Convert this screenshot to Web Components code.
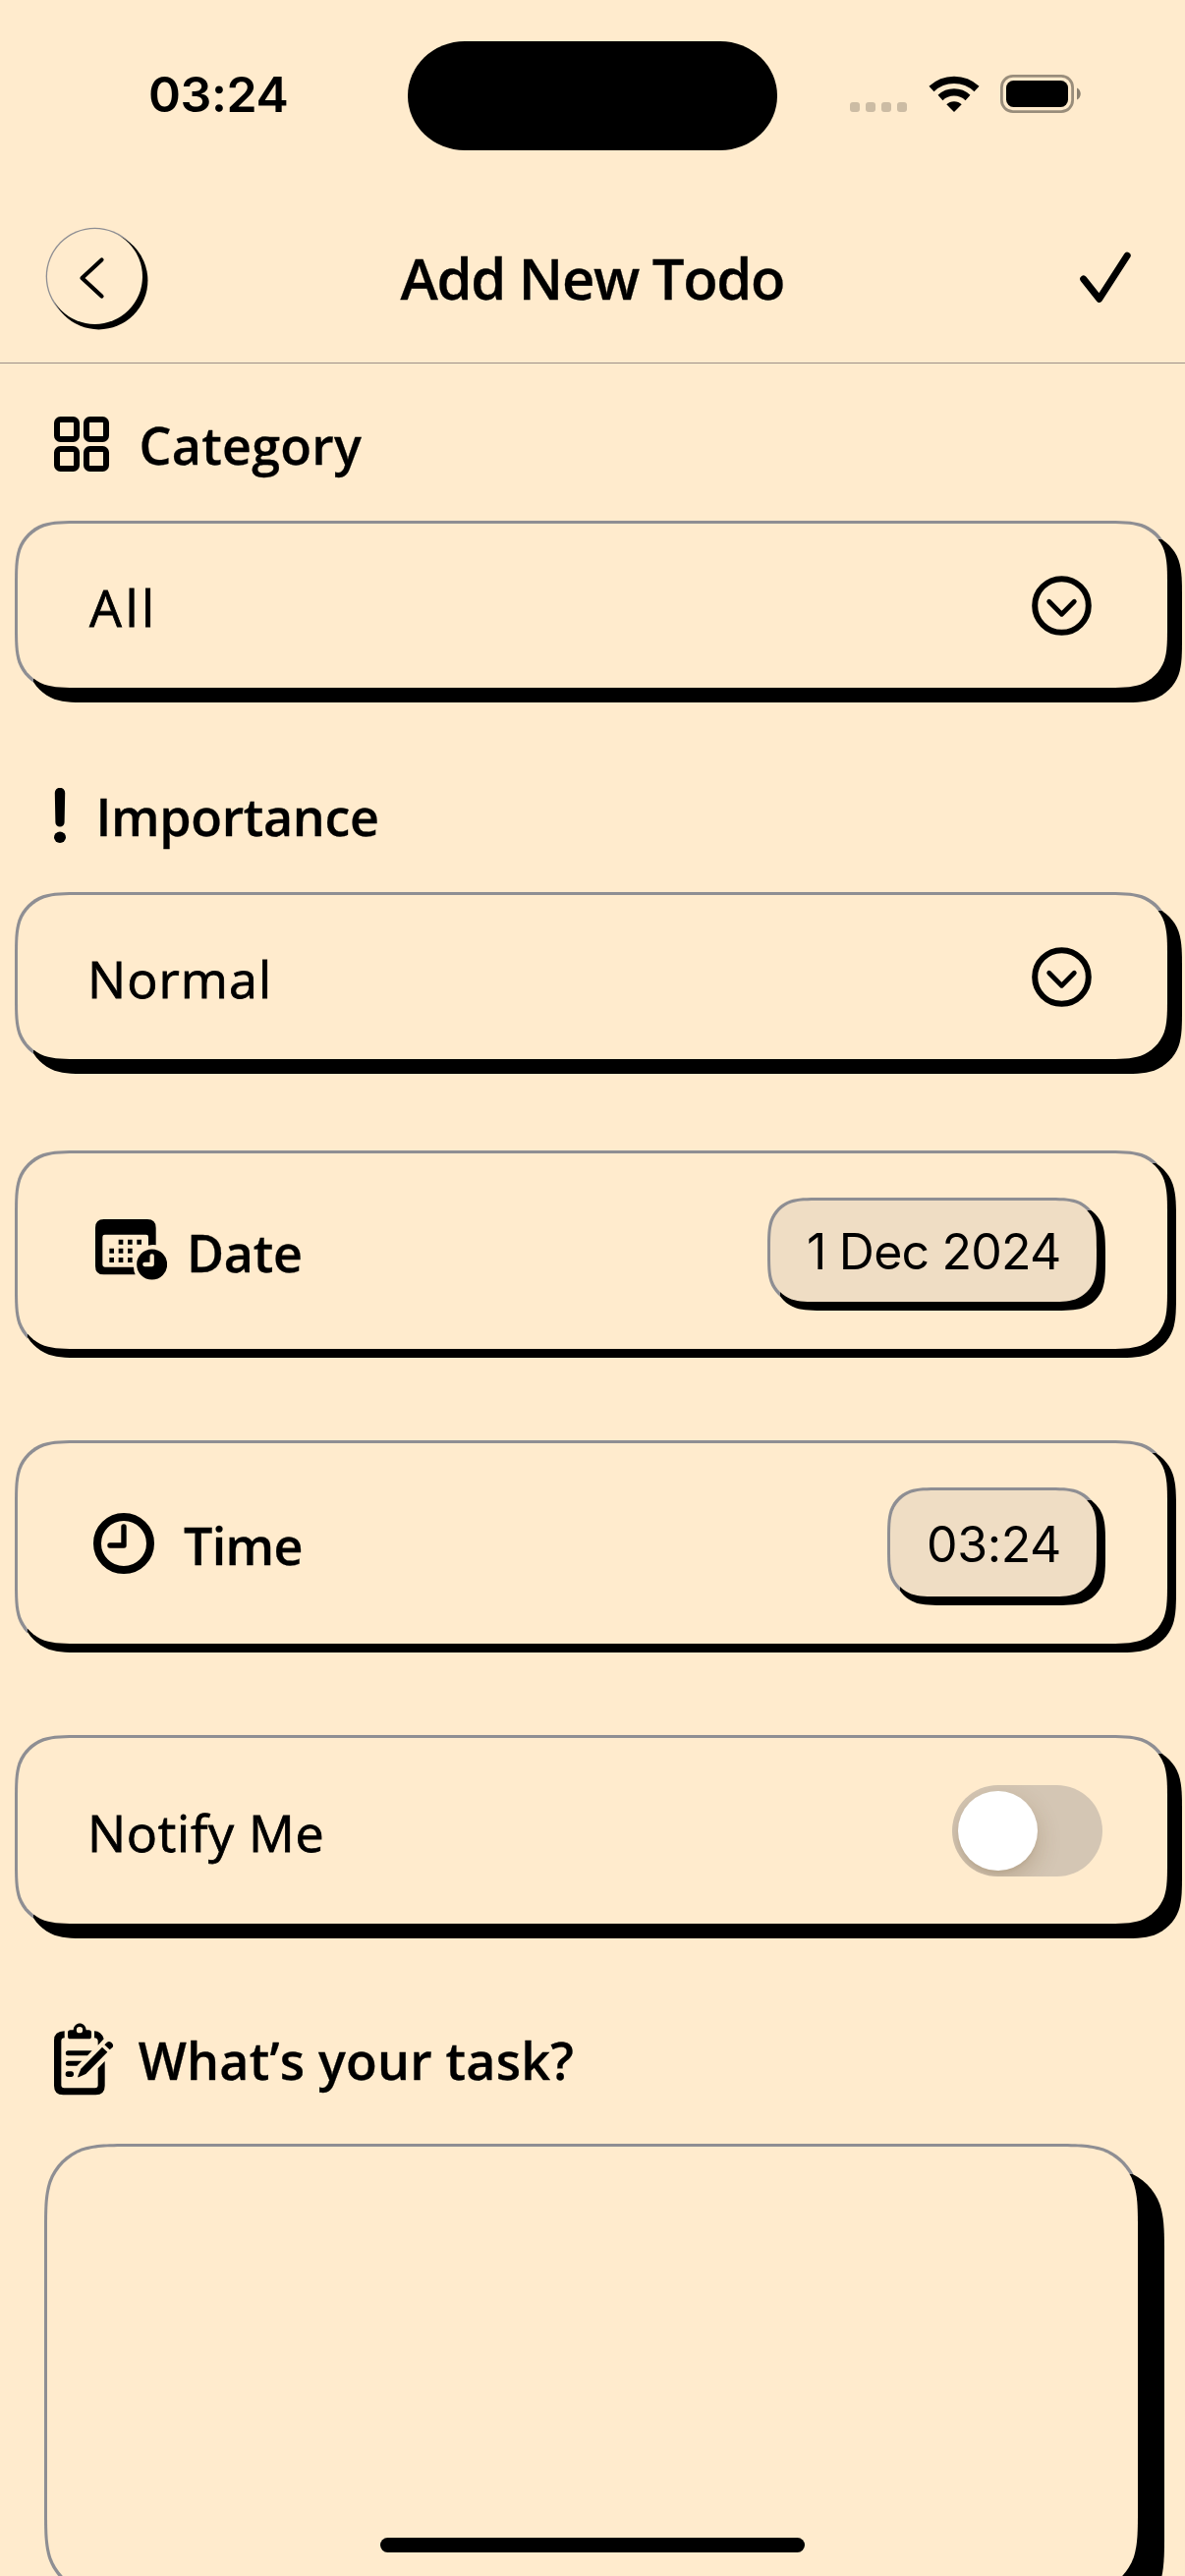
<!DOCTYPE html>
<html lang="en">
<head>
<meta charset="utf-8">
<title>Add New Todo</title>
<style>
  html, body { margin: 0; padding: 0; }
  body {
    width: 1206px; height: 2622px; overflow: hidden;
    background: #ffebcd; color: #000;
    font-family: "Open Sans", sans-serif;
  }
</style>
</head>
<body>
<todo-screen></todo-screen>

<script>
const define = (name, html, setup) => customElements.define(name, class extends HTMLElement {
  constructor() {
    super();
    this.attachShadow({ mode: 'open' }).innerHTML = html;
  }
  connectedCallback() { if (setup) setup.call(this); }
});

/* One line of text whose visible ink spans exactly the width in "w". */
const pen = document.createElement('canvas').getContext('2d');
define('ink-text', `
  <style>
    :host { display: block; flex: none; height: 60px; line-height: 60px; white-space: nowrap; -webkit-text-stroke: .8px #000; }
    :host([weight]) { -webkit-text-stroke: .3px #000; }
    :host([family]) { -webkit-text-stroke: 0; }
    span { display: inline-block; height: 60px; }
  </style><span><slot></slot></span>`, function () {
  const text = this.textContent, w = +this.getAttribute('w');
  const size = this.getAttribute('size') || 52, weight = this.getAttribute('weight') || 400;
  const family = this.getAttribute('family') || 'Open Sans';
  const dy = +(this.getAttribute('dy') || 0);
  pen.font = `${weight} ${size}px "${family}"`;
  const m = pen.measureText(text);
  const ink = m.actualBoundingBoxLeft + m.actualBoundingBoxRight;
  const s = this.style;
  s.font = `${weight} ${size}px/60px "${family}", sans-serif`;
  s.width = w + 'px';
  s.letterSpacing = ((w - ink) / (text.length - 1)).toFixed(3) + 'px';
  if (dy > 0) s.marginTop = 2 * dy + 'px'; else s.marginBottom = -2 * dy + 'px';
  this.shadowRoot.querySelector('span').style.marginLeft = m.actualBoundingBoxLeft + 'px';
});

/* Rounded rectangle with continuous corners, as a path. */
function smoothRect(x, y, w, h, r) {
  const steps = [[1.528665, 0], [1.088493, 0], [.868407, 0], [.631494, .074911], [.372824, .169059], [.169059, .372824], [.074911, .631494], [0, .868407], [0, 1.088493], [0, 1.528665]];
  const corner = (fx, fy, flip) => {
    const p = (flip ? [...steps].reverse() : steps).map(([a, b]) => [fx(a * r), fy(b * r)].map(n => n.toFixed(2)).join(' '));
    return `L${p[0]}C${p.slice(1, 4).join(' ')}C${p.slice(4, 7).join(' ')}C${p.slice(7, 10).join(' ')}`;
  };
  const L = a => x + a, R = a => x + w - a, T = b => y + b, B = b => y + h - b;
  return ('M' + corner(R, T, false).slice(1) + corner(R, B, true) + corner(L, B, false) + corner(L, T, true) + 'Z');
}

/* Grey outline on the lit side, hard black shadow offset by "drop" towards lower right. */
const raisedHTML = `
  <style>
    :host { display: grid; flex: none; }
    svg { grid-area: 1 / 1; display: block; overflow: visible; }
    .in { grid-area: 1 / 1; display: flex; align-items: center; justify-content: space-between; min-width: 0; }
  </style><svg></svg><div class="in"><slot></slot></div>`;
function drawRaised() {
  const num = (k, d) => +(this.getAttribute(k) || d);
  const w = num('w', 1170), h = num('h'), drop = num('drop', 12), r = num('r', 45);
  const fill = this.getAttribute('fill') || '#ffebcd';
  this.style.width = w + 'px';
  this.style.height = h + 'px';
  const svg = this.shadowRoot.querySelector('svg');
  svg.setAttribute('width', w);
  svg.setAttribute('height', h);
  const d = drop + 4;
  svg.innerHTML =
    `<clipPath id="lit"><path d="M-5 -5H${w + 5}V${d}H60L${d} 60V${h + 5}H-5Z"/></clipPath>` +
    `<path fill="#000" d="${smoothRect(drop - 3, drop - 3, w + 6, h + 6, r)}"/>` +
    `<path fill="#8e8e93" clip-path="url(#lit)" d="${smoothRect(-3, -3, w + 6, h + 6, r)}"/>` +
    `<path fill="${fill}" d="${smoothRect(0, 0, w, h, r - 2)}"/>`;
}
define('raised-card', raisedHTML + `<style>:host { margin-left: 18px; } .in { padding: var(--pad, 0); }</style>`, drawRaised);
define('value-pill', raisedHTML + `<style>.in { padding: 0 38px 0 39px; }</style>`, drawRaised);

define('status-bar', `
  <style>
    :host { display: flex; flex: none; align-items: center; height: 194px; box-sizing: border-box; padding-left: 153px; }
    svg { flex: none; display: block; }
    .icon { margin-bottom: 3px; }
  </style>
  <ink-text w="138.5" size="50" weight="600" family="Inter" dy="-1.2">03:24</ink-text>
  <svg class="island" width="376" height="111" style="margin-left:123.5px"><rect width="376" height="111" rx="58" ry="55.5"/></svg>
  <svg class="icon" width="58" height="39" viewBox="865 76 58 39" style="margin-left:74px" fill="#000" fill-opacity=".2">
    <rect x="865" y="104" width="10" height="10" rx="3"/><rect x="881" y="104" width="10" height="10" rx="3"/>
    <rect x="897" y="104" width="10" height="10" rx="3"/><rect x="913" y="104" width="10" height="10" rx="3"/>
  </svg>
  <svg class="icon" width="52" height="39" viewBox="944.5 76 52 39" style="margin-left:21.5px">
    <path d="M947.5 90.5A33.5 33.5 0 0 1 993.5 90.5" fill="none" stroke="#000" stroke-width="7.4"/>
    <path d="M956.5 99.5A20.5 20.5 0 0 1 984.5 99.5" fill="none" stroke="#000" stroke-width="7.2"/>
    <path d="M970.5 114L962.8 106.3A11 11 0 0 1 978.2 106.3Z"/>
  </svg>
  <svg class="icon" width="83" height="39" viewBox="1018 76 83 39" style="margin-left:21.5px">
    <rect x="1019.4" y="77.4" width="72.2" height="36.2" rx="11.5" fill="none" stroke="#000" stroke-opacity=".4" stroke-width="2.8"/>
    <rect x="1024" y="82" width="63" height="27" rx="7.5"/>
    <path d="M1096 89.5C1101 91.5 1101 99.5 1096 101.5Z" fill-opacity=".45"/>
  </svg>`);

define('nav-bar', `
  <style>
    :host { display: flex; flex: none; align-items: center; height: 176px; box-sizing: border-box;
      border-bottom: 1.5px solid #9c9088; padding-left: 47.5px; }
    .back { flex: none; display: flex; width: 97px; height: 97px; border-radius: 50%; background: #ffebcd;
      box-shadow: 4px 4px 0 1.4px #000, 0 0 0 1.3px #8e8e93; }
    .done { flex: none; display: block; margin-left: 301px; }
  </style>
  <div class="back"><svg width="97" height="97" viewBox="47.5 233 97 97">
    <path d="M103 264.5L83 283L103 301.5" fill="none" stroke="#000" stroke-width="4.2" stroke-linecap="round" stroke-linejoin="round"/></svg></div>
  <ink-text w="389.5" size="58" weight="600" dy="1.8" style="margin-left:263px">Add New Todo</ink-text>
  <svg class="done" width="54" height="56" viewBox="1098 254 54 56">
    <path d="M1102.7 284L1118.8 304.2L1147.2 260.2" fill="none" stroke="#000" stroke-width="7" stroke-linecap="round" stroke-linejoin="round"/></svg>`);

define('section-head', `
  <style>
    :host { display: flex; flex: none; align-items: center; height: 76px; padding-left: 55px; }
    ::slotted(svg) { flex: none; display: block; }
  </style><slot></slot>`);

define('toggle-switch', `
  <style>
    :host { display: flex; align-items: center; flex: none; width: 153px; height: 93px; box-sizing: border-box;
      padding-left: 6px; border-radius: 47px; background: #d4c6b4; overflow: hidden; }
    i { width: 81px; height: 81px; border-radius: 50%; background: #fff; box-shadow: 0 9px 24px rgba(90,60,20,.22), 0 3px 3px rgba(90,60,20,.06); }
  </style><i></i>`);

define('chevron-ring', `
  <style>:host, svg { display: block; flex: none; }</style>
  <svg width="61" height="61" viewBox="-30.5 -30.5 61 61" fill="none" stroke="#000">
    <circle r="27.3" stroke-width="6"/>
    <path d="M-12.8 -4.2L0 8.7L12.8 -4.2" stroke-width="4.8" stroke-linecap="round" stroke-linejoin="round"/>
  </svg>`);

define('home-indicator', `
  <style>:host { display: block; position: absolute; left: 387px; top: 2583px; width: 432px; height: 15px; border-radius: 8px; background: #000; }</style>`);

define('todo-screen', `
  <style>
    :host { display: flex; flex-direction: column; width: 1206px; height: 2622px; overflow: hidden; position: relative; }
    main { display: flex; flex: none; flex-direction: column; }
    .row { display: flex; align-items: center; }
    svg { display: block; flex: none; }
  </style>
  <status-bar></status-bar>
  <nav-bar></nav-bar>
  <main>
    <section-head style="margin-top:44px">
      <svg width="56" height="56" viewBox="0 0 56 56" fill="none" stroke="#000" stroke-width="6">
        <rect x="3" y="3" width="20" height="20" rx="3.5"/><rect x="33" y="3" width="20" height="20" rx="3.5"/>
        <rect x="3" y="33" width="20" height="20" rx="3.5"/><rect x="33" y="33" width="20" height="20" rx="3.5"/>
      </svg>
      <ink-text w="223.5" weight="600" dy=".6" style="margin-left:33.5px">Category</ink-text>
    </section-head>
    <raised-card h="167" style="margin-top:43px;--pad:0 77px 0 73px">
      <ink-text w="62" dy="1.2">All</ink-text><chevron-ring></chevron-ring>
    </raised-card>

    <section-head style="margin-top:92px">
      <svg width="12" height="56" viewBox="55 802 12 56">
        <path d="M55.8 807A5.2 5.2 0 0 1 66.2 807L65.6 837A4.6 4.6 0 0 1 56.4 837Z"/><ellipse cx="61" cy="852.3" rx="6" ry="5.7"/>
      </svg>
      <ink-text w="282.5" weight="600" dy=".6" style="margin-left:34.5px">Importance</ink-text>
    </section-head>
    <raised-card h="167" style="margin-top:43px;--pad:0 77px 0 76px">
      <ink-text w="178" dy="1.3">Normal</ink-text><chevron-ring></chevron-ring>
    </raised-card>

    <raised-card h="199" drop="6" style="margin-top:96px;--pad:0 72px 0 79px">
      <div class="row">
        <svg width="73" height="62" viewBox="291 304 219 186" style="margin-bottom:3px">
          <path fill-rule="evenodd" d="M317 304H450Q476 304 476 330V383Q466 381 453 384V358Q453 351 446 351H320Q313 351 313 358V443Q313 450 320 450H408Q408 462 413 473H317Q291 473 291 447V330Q291 304 317 304Z"/>
          <path d="M362 366h14v15h-14zM390 366h14v15h-14zM418 366h14v15h-14zM334 393h14v15h-14zM362 393h14v15h-14zM390 393h14v15h-14zM334 421h14v15h-14zM362 421h14v15h-14zM390 421h14v15h-14z"/>
          <circle cx="464" cy="442" r="46.5"/>
          <path d="M464 416V442H442" fill="none" stroke="#ffebcd" stroke-width="13" stroke-linecap="round" stroke-linejoin="round"/>
        </svg>
        <ink-text w="112" weight="600" dy="1.3" style="margin-left:24px">Date</ink-text>
      </div>
      <value-pill w="332" h="103" drop="6" r="36" fill="#efddc4"><ink-text w="255" size="50" weight="400" family="Inter" dy=".8">1 Dec 2024</ink-text></value-pill>
    </raised-card>

    <raised-card h="204" drop="6" style="margin-top:96px;--pad:0 72px 0 77px">
      <div class="row">
        <svg width="62" height="62" viewBox="-31 -31 62 62" fill="none" stroke="#000">
          <circle r="27" stroke-width="8"/>
          <path d="M0 -17V2H-14" stroke-width="5.4" stroke-linecap="round" stroke-linejoin="round"/>
        </svg>
        <ink-text w="119.5" weight="600" dy="1.8" style="margin-left:30px">Time</ink-text>
      </div>
      <value-pill w="210" h="108" drop="6" r="36" fill="#efddc4"><ink-text w="133" size="50" weight="400" family="Inter" dy=".8">03:24</ink-text></value-pill>
    </raised-card>

    <raised-card h="189" style="margin-top:96px;--pad:0 66px 0 76px">
      <ink-text w="233.5" dy="1.3">Notify Me</ink-text><toggle-switch></toggle-switch>
    </raised-card>

    <section-head style="margin-top:100px">
      <svg width="61.7" height="74" viewBox="45 41 185 222">
        <path d="M77 66V87Q67 87 67 97V231Q67 240 76 240H170Q179 240 179 231V180L200 158V233Q200 261 172 261H73Q45 261 45 233V94Q45 67 77 66Z"/>
        <path d="M168 66Q190 67 197 90L179 109V97Q179 88 168 87Z"/>
        <path fill-rule="evenodd" d="M95 63H104C106 36 141 36 143 63H151Q159 63 159 71V82Q159 90 151 90H95Q87 90 87 82V71Q87 63 95 63ZM123 53A9.5 9.5 0 1 0 123 72A9.5 9.5 0 1 0 123 53Z"/>
        <path d="M88 126H161L147 141H88A7.5 7.5 0 0 1 88 126ZM88 157H130L115 172H88A7.5 7.5 0 0 1 88 157Z"/>
        <rect x="80" y="189" width="25" height="17" rx="8"/>
        <path d="M192 115L208 130L142 197L120 207Q116 208 118 203L127 181Z"/>
        <path d="M199 108L207 100Q213 96 220 101Q228 108 224 115L215 123Z"/>
      </svg>
      <ink-text w="442.5" weight="600" dy="1.3" style="margin-left:24px">What’s your task?</ink-text>
    </section-head>
    <raised-card w="1110" h="455" drop="24" r="60" style="margin:51px 0 0 48px"></raised-card>
  </main>
  <home-indicator></home-indicator>`);
</script>
</body>
</html>
